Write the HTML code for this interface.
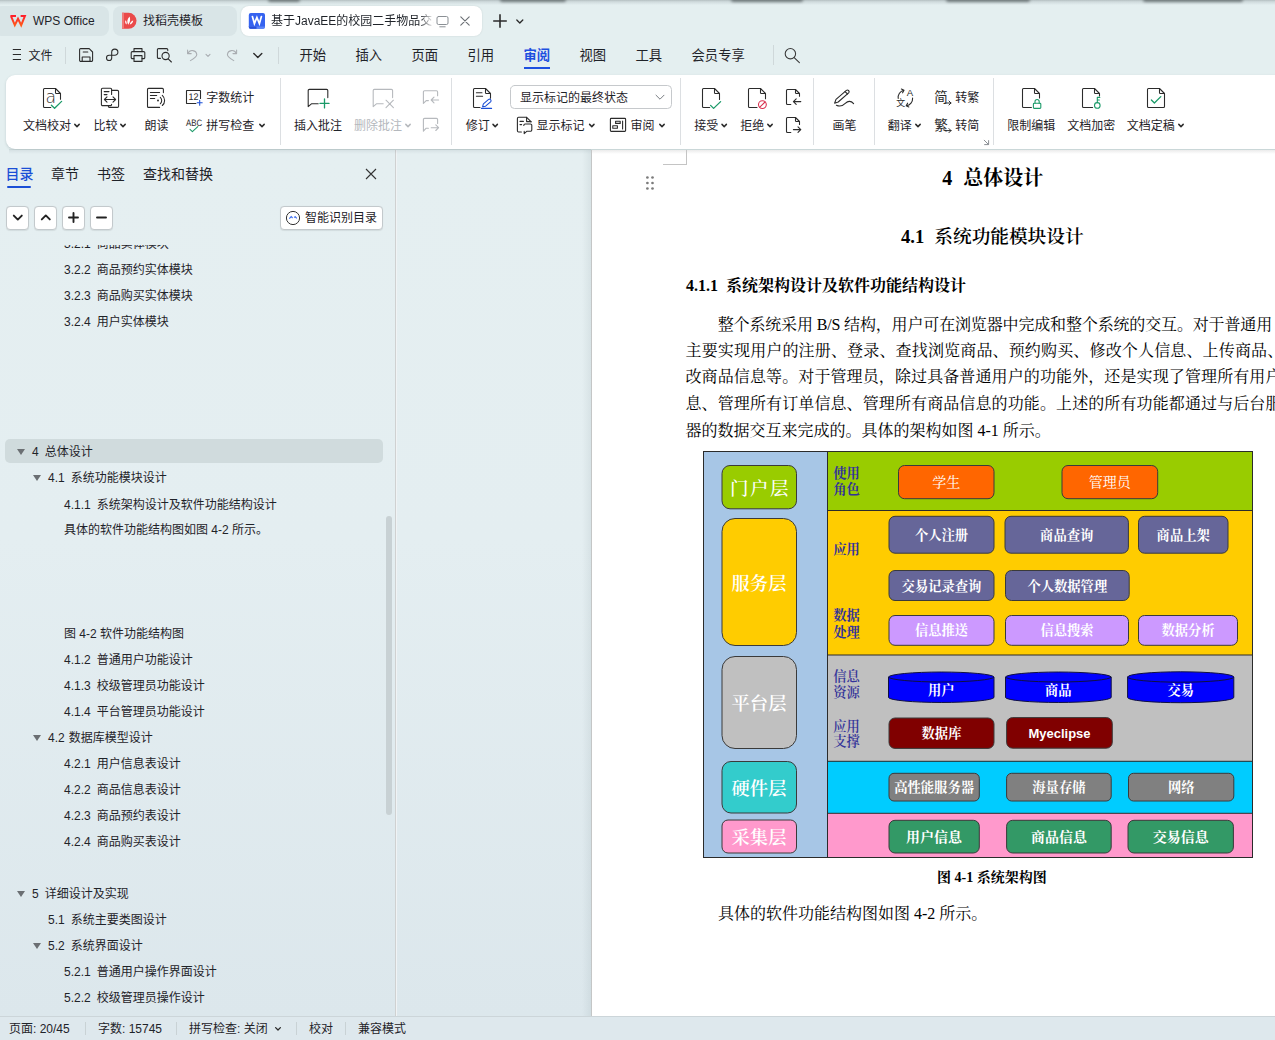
<!DOCTYPE html>
<html lang="zh-CN">
<head>
<meta charset="utf-8">
<title>WPS Office</title>
<style>
*{box-sizing:border-box;margin:0;padding:0}
html,body{width:1275px;height:1040px;overflow:hidden}
body{position:relative;background:#e4eff0;font-family:"Liberation Sans","Noto Sans CJK SC",sans-serif;font-size:13px;color:#1f2329}
.abs{position:absolute}
.t{position:absolute;white-space:nowrap;line-height:1}
svg{position:absolute;overflow:visible}
/* ---------- title tabs ---------- */
#titlebar{position:absolute;left:0;top:0;width:1275px;height:40px;background:#e4eff0;overflow:hidden}
.tab{position:absolute;top:6px;height:30px;border-radius:8px;background:#d9e5e7}
.tab.act{background:#fff;box-shadow:0 0 2px rgba(0,0,0,.12)}
/* ---------- menu ---------- */
#menubar{position:absolute;left:0;top:40px;width:1275px;height:34px}
.mi{position:absolute;top:8px;font-size:13.33px;line-height:16px;white-space:nowrap;color:#1f2329}
.vsep{position:absolute;width:1px;background:#cfd8da}
/* ---------- ribbon ---------- */
#ribbon{position:absolute;left:6px;top:74.5px;width:1275px;height:74px;background:#fff;border-radius:9px 0 0 9px;box-shadow:0 1px 2.5px rgba(60,80,85,.22)}
.rl{position:absolute;font-size:12px;line-height:14px;white-space:nowrap;color:#1f2329}
.rl.dis{color:#b4b8bd}
.rsep{position:absolute;top:78px;width:1px;height:67px;background:#dcdfe2}
/* ---------- sidebar ---------- */
#sidebar{position:absolute;left:0;top:150px;width:395px;height:866px;background:linear-gradient(180deg,#e5eff1 0,#e4eef1 45%,#dce7ec 100%)}
.sb{position:absolute;font-size:12px;line-height:14px;white-space:nowrap;color:#1f2329}
.btn{position:absolute;background:#fff;border:1px solid #c3c9cc;border-radius:4px;box-shadow:0 .5px 1px rgba(0,0,0,.08)}
/* ---------- doc ---------- */
#gutter{position:absolute;left:396px;top:150px;width:196px;height:866px;background:linear-gradient(90deg,#f0f3f5 0,#f0f3f5 1px,rgba(255,255,255,0) 1px,rgba(255,255,255,0) 186px,rgba(120,140,145,.12) 195px,#c4c6c6 195px),linear-gradient(180deg,#e5eff1 0,#e4eef1 45%,#dce7ec 100%)}
#page{position:absolute;left:592px;top:150px;width:683px;height:866px;background:linear-gradient(180deg,#ebebeb 0,#fff 4px);overflow:hidden}
.doc{font-family:"Liberation Serif","Noto Serif CJK SC",serif;color:#000}
/* ---------- status ---------- */
#status{position:absolute;left:0;top:1016px;width:1275px;height:24px;background:#dee8ed;border-top:1px solid #ccd5d9}
.st{position:absolute;top:5px;font-size:12px;line-height:14px;white-space:nowrap;color:#1f2329}
</style>
</head>
<body>
<!-- TITLEBAR -->
<div id="titlebar">
  <div class="abs" style="left:0;top:0;width:1275px;height:5px;background:linear-gradient(180deg,#b4bfc1 0,#cfdadc 35%,rgba(228,239,240,0) 100%)"></div><div class="abs" style="left:268px;top:-3px;width:32px;height:5px;border-radius:3px;background:#5f686a;filter:blur(1.5px);opacity:.8"></div><div class="abs" style="left:500px;top:-3px;width:66px;height:5px;border-radius:3px;background:#5f686a;filter:blur(1.5px);opacity:.8"></div><div class="abs" style="left:731px;top:-3px;width:72px;height:5px;border-radius:3px;background:#5f686a;filter:blur(1.5px);opacity:.8"></div><div class="abs" style="left:946px;top:-3px;width:84px;height:5px;border-radius:3px;background:#5f686a;filter:blur(1.5px);opacity:.8"></div><div class="abs" style="left:1143px;top:-3px;width:100px;height:5px;border-radius:3px;background:#5f686a;filter:blur(1.5px);opacity:.8"></div>
  <div class="tab" style="left:-6px;width:114.6px"></div>
  <div class="tab" style="left:113px;width:124px"></div>
  <div class="tab act" style="left:241px;width:241px"></div>
  <div class="t" style="left:33px;top:14px;font-size:12px;line-height:14px">WPS Office</div>
  <div class="t" style="left:143px;top:14px;font-size:12px;line-height:14px">找稻壳模板</div>
  <div class="t" style="left:271px;top:14px;font-size:12px;line-height:14px;width:163px;overflow:hidden;-webkit-mask-image:linear-gradient(90deg,#000 0,#000 148px,transparent 163px);mask-image:linear-gradient(90deg,#000 0,#000 148px,transparent 163px)">基于JavaEE的校园二手物品交易系统</div>
</div>
<!-- MENUBAR -->
<div id="menubar">
  <div class="mi" style="left:28.5px;font-size:12px;top:8px">文件</div>
  <div class="mi" style="left:299.5px">开始</div>
  <div class="mi" style="left:355.5px">插入</div>
  <div class="mi" style="left:411.5px">页面</div>
  <div class="mi" style="left:467.5px">引用</div>
  <div class="mi" style="left:523.5px;color:#1e50e0;font-weight:bold">审阅</div>
  <div class="mi" style="left:579.5px">视图</div>
  <div class="mi" style="left:635.5px">工具</div>
  <div class="mi" style="left:691.5px">会员专享</div>
  <div class="abs" style="left:524px;top:26.7px;width:26px;height:2.4px;background:#1e50e0"></div>
  <div class="vsep" style="left:65px;top:7px;height:17px"></div>
  <div class="vsep" style="left:278px;top:7px;height:17px"></div>
  <div class="vsep" style="left:773px;top:5px;height:20px"></div>
</div>
<!-- RIBBON -->
<div id="ribbon"></div>
<!--TOPSTART--><svg id="icons" style="left:0;top:0" width="1275" height="150" viewBox="0 0 1275 150" fill="none" stroke-linecap="round" stroke-linejoin="round">
<defs><linearGradient id="wg" x1="0" y1="0" x2="0" y2="1"><stop offset="0" stop-color="#ff1f2b"/><stop offset="1" stop-color="#ff5a1a"/></linearGradient></defs>
<path d="M10.4 16H16M11 16.2L14.8 25.2L18 18.8L21.2 25.2L24.9 16H20.6" stroke="url(#wg)" stroke-width="2" stroke-linejoin="miter" stroke-linecap="butt"/>
<path d="M122 12.8H128.5A8 8 0 0 1 128.5 28.8H122Z" fill="#ea4a4a" stroke="none"/>
<path d="M122 12.8H124V28.8H122Z" fill="#f07a78" stroke="none"/>
<path d="M128.2 24.8C126.6 22 127.2 19 129.6 16.6C130.6 19.4 130.2 22.4 128.2 24.8ZM126.6 24.6C125.2 23.6 124.8 22 125.4 20.2C126.6 21.2 127 22.8 126.6 24.6ZM129.8 24.6C131.8 24 133 22.6 133.2 20.6C131.4 21.2 130.2 22.6 129.8 24.6Z" fill="#fff" stroke="none"/>
<rect x="248.8" y="13" width="16.2" height="15.8" rx="2" fill="#3663f0" stroke="none"/>
<path d="M248.8 26.6H265V27A1.8 1.8 0 0 1 263.2 28.8H250.6A1.8 1.8 0 0 1 248.8 27Z" fill="#5c85f7" stroke="none"/>
<path d="M248.8 26.6H256.5V28.8H250.6A1.8 1.8 0 0 1 248.8 27Z" fill="#2a4fd6" stroke="none"/>
<path d="M252.4 16.6L254.4 23.6L256.9 17.4L259.4 23.6L261.4 16.6" stroke="#fff" stroke-width="1.7" stroke-linejoin="miter"/>
<g stroke="#8a8f94" stroke-width="1"><rect x="437" y="16.5" width="11" height="8" rx="1.5"/><path d="M439.8 26.8H445.2"/></g>
<path d="M460.8 16.8L469.2 25.2M469.2 16.8L460.8 25.2" stroke="#6a6e73" stroke-width="1.1"/>
<path d="M493.2 21H506.8M500 14.2V27.8" stroke="#2b2b2b" stroke-width="1.6" stroke-linecap="butt"/>
<path d="M516.8 20L519.8 23L522.8 20" stroke="#2b2b2b" stroke-width="1.3"/>
<path d="M12.8 49.5H21M12.8 54.5H21M12.8 59.5H21" stroke="#2b2b2b" stroke-width="1.1" stroke-linecap="butt"/>
<g stroke="#2b2b2b" stroke-width="1.08"><path d="M81 48.6H89.2L92.6 52V60.2A1.2 1.2 0 0 1 91.4 61.4H90.2M81.8 61.4H80.8A1.2 1.2 0 0 1 79.6 60.2V49.8A1.2 1.2 0 0 1 80.8 48.6"/><path d="M83.2 52H87.8"/><path d="M82.2 61.4V57H90V61.4Z"/></g>
<path d="M112 55.3H114.8A3.1 3.1 0 1 0 111.7 52.2V57.9A2.6 2.6 0 1 1 109.1 55.3H112" stroke="#2b2b2b" stroke-width="1.08"/>
<g stroke="#2b2b2b" stroke-width="1.08"><path d="M134 51.6V48.6H142V51.6"/><path d="M134 58.6H132.4A1.2 1.2 0 0 1 131.2 57.4V52.8A1.2 1.2 0 0 1 132.4 51.6H143.6A1.2 1.2 0 0 1 144.8 52.8V57.4A1.2 1.2 0 0 1 143.6 58.6H142"/><rect x="134" y="55.6" width="8" height="5.8"/></g>
<g stroke="#2b2b2b" stroke-width="1.08"><path d="M160.4 58.4H158.6A1.2 1.2 0 0 1 157.4 57.2V49.8A1.2 1.2 0 0 1 158.6 48.6H166.6A1.2 1.2 0 0 1 167.8 49.8V50.6"/><circle cx="165.6" cy="56" r="3.6"/><path d="M168.2 58.8L171.4 62"/></g>
<g stroke="#a9adb1" stroke-width="1.08"><path d="M187.6 50V53.6H191.2"/><path d="M188 53.4A4.6 4.6 0 0 1 196.8 54.6C196.8 57 194 58.6 190.4 60.6"/><path d="M206 54.4L208 56.4L210 54.4"/><path d="M236.6 50V53.6H233"/><path d="M236.2 53.4A4.6 4.6 0 0 0 227.4 54.6C227.4 57 230.2 58.6 233.8 60.6"/></g>
<path d="M253.8 53.4L257.8 57.4L261.8 53.4" stroke="#2b2b2b" stroke-width="1.4"/>
<g stroke="#3a3a3a" stroke-width="1.08"><circle cx="790.4" cy="53.7" r="5.2"/><path d="M794.2 57.6L799.4 62.6"/></g>
<path d="M50.8 107.5H44.5A1.0 1.0 0 0 1 43.5 106.5V89.5A1.0 1.0 0 0 1 44.5 88.5H55.5L60.5 93.5V99.2M55.5 88.5V92.7A0.8 0.8 0 0 0 56.3 93.5H60.5" stroke="#2b2b2b" stroke-width="1.08"/>
<text x="50.9" y="103.3" font-family="'DejaVu Sans',sans-serif" font-weight="200" font-size="18" fill="#2b2b2b" stroke="none" text-anchor="middle" textLength="10.6" lengthAdjust="spacingAndGlyphs">a</text>
<path d="M51.4 105.2L54.6 108.2L61.6 101.4" stroke="#1a9a68" stroke-width="1.3"/>
<g stroke="#2b2b2b" stroke-width="1.08"><path d="M111.6 90.4H117.4A1.2 1.2 0 0 1 118.6 91.6V106.2A1.2 1.2 0 0 1 117.4 107.4H109.6A1.2 1.2 0 0 1 108.4 106.2V105.6"/><path d="M111.6 104.2V104.4A1.2 1.2 0 0 1 110.4 105.6H102.6A1.2 1.2 0 0 1 101.4 104.4V89.5A1.2 1.2 0 0 1 102.6 88.3H110.4A1.2 1.2 0 0 1 111.6 89.5V94.4"/><path d="M104.2 91.6H109M104.2 94.6H107"/><path d="M104.4 99.5H115.6M107 96.9L104.4 99.5L107 102.1M113 96.9L115.6 99.5L113 102.1"/></g>
<g stroke="#2b2b2b" stroke-width="1.08"><path d="M159.6 107.4H148.5A1 1 0 0 1 147.5 106.4V89.4A1 1 0 0 1 148.5 88.4H162.4A1 1 0 0 1 163.4 89.4V92.6"/><path d="M150.4 92.5H159.6M150.4 95.5H156.7M150.4 98.5H154.7"/><path d="M160.3 97.3A4.5 4.5 0 0 1 160.3 103.8"/><path d="M162.3 95.3A6.8 6.8 0 0 1 162.3 105.5"/></g>
<circle cx="158" cy="100.5" r="0.95" fill="#2b2b2b" stroke="none"/>
<path d="M195.9 103.5H186.8A0.3 0.3 0 0 1 186.5 103.2V90.8A0.3 0.3 0 0 1 186.8 90.5H200.2A0.3 0.3 0 0 1 200.5 90.8V98.4" stroke="#2b2b2b" stroke-width="1.1"/>
<text x="193.5" y="100" text-rendering="geometricPrecision" font-family="'Liberation Sans',sans-serif" font-size="9.5" fill="#2b2b2b" stroke="none" text-anchor="middle" textLength="10" lengthAdjust="spacingAndGlyphs">12</text>
<path d="M197.2 102.8H202.2M199.7 100.3V105.3" stroke="#1b4fd6" stroke-width="1.08"/>
<text x="194.2" y="126" font-family="'Liberation Sans',sans-serif" font-size="9.3" text-rendering="geometricPrecision" fill="#2b2b2b" stroke="none" text-anchor="middle" textLength="16.2" lengthAdjust="spacingAndGlyphs">ABC</text>
<path d="M190 129.4L192.4 131.6L197.8 126.6" stroke="#1a9a68" stroke-width="1.08"/>
<path d="M327.8 97.6V90.60000000000001A1.2 1.2 0 0 0 326.6 89.4H309.4A1.2 1.2 0 0 0 308.2 90.60000000000001V106.6L311.4 103.8H318.2" stroke="#2b2b2b" stroke-width="1.08"/>
<path d="M320 103.4H329M324.5 98.9V107.9" stroke="#1a9a68" stroke-width="1.3"/>
<path d="M392.6 97.6V90.60000000000001A1.2 1.2 0 0 0 391.40000000000003 89.4H374.4A1.2 1.2 0 0 0 373.2 90.60000000000001V106.6L376.4 103.8H383.2" stroke="#b6b9bd" stroke-width="1.08"/>
<path d="M386 100.2L393.4 107.6M393.4 100.2L386 107.6" stroke="#b6b9bd" stroke-width="1.08"/>
<path d="M437.6 95.8V92.0A1.2 1.2 0 0 0 436.40000000000003 90.8H424.59999999999997A1.2 1.2 0 0 0 423.4 92.0V103.4L426.2 100.6H428.4" stroke="#b6b9bd" stroke-width="1.1"/>
<path d="M431.2 100H438.6M434 97.2L431.2 100L434 102.8" stroke="#b6b9bd" stroke-width="1.1"/>
<path d="M437.6 123.4V119.60000000000001A1.2 1.2 0 0 0 436.40000000000003 118.4H424.59999999999997A1.2 1.2 0 0 0 423.4 119.60000000000001V131.2L426.2 128.2H428.4" stroke="#b6b9bd" stroke-width="1.1"/>
<path d="M431.2 127.7H438.6M435.8 124.9L438.6 127.7L435.8 130.5" stroke="#b6b9bd" stroke-width="1.1"/>
<path d="M480 107.5H474.5A1.0 1.0 0 0 1 473.5 106.5V89.5A1.0 1.0 0 0 1 474.5 88.5H485.5L490.5 93.5V98.2M485.5 88.5V92.7A0.8 0.8 0 0 0 486.3 93.5H490.5" stroke="#2b2b2b" stroke-width="1.08"/>
<path d="M476.4 92.8H482M476.4 96.3H482.6" stroke="#2b2b2b" stroke-width="1.08"/>
<path d="M482.6 106.6L483.4 103.8L488.6 99.4A1.6 1.6 0 0 1 490.8 101.6L485.6 106.2ZM481.4 108.4H491.6" stroke="#1b4fd6" stroke-width="1.08"/>
<rect x="510.5" y="85.5" width="161" height="23" rx="4" stroke="#c6c9cc" stroke-width="1" fill="#fff"/>
<path d="M656 95.2L660 99.2L664 95.2" stroke="#7a7e83" stroke-width="1"/>
<g stroke="#2b2b2b" stroke-width="1.1"><path d="M521.4 132H518.6A1.2 1.2 0 0 1 517.4 130.8V118.5A1.2 1.2 0 0 1 518.6 117.3H526.6L531 121.6V122"/><path d="M526.6 117.3V121.6H531"/><path d="M520 121.4H523.4M520 124.6H521.6"/><path d="M524.2 131.4V133.6L527 131.2H530.4A1.4 1.4 0 0 0 531.8 129.8V125.4A1.4 1.4 0 0 0 530.4 124H525.2A1.4 1.4 0 0 0 523.8 125.4"/></g>
<g stroke="#2b2b2b" stroke-width="1.1"><rect x="610.4" y="118.4" width="15.2" height="13" rx="0.8"/><rect x="615.6" y="121.2" width="4.6" height="2.2"/><rect x="612.8" y="125.8" width="4.6" height="2.4"/><path d="M622.6 121V129"/></g>
<path d="M709.7 107.5H703.5A1.0 1.0 0 0 1 702.5 106.5V89.5A1.0 1.0 0 0 1 703.5 88.5H714.5L719.5 93.5V99.5M714.5 88.5V92.7A0.8 0.8 0 0 0 715.3 93.5H719.5" stroke="#2b2b2b" stroke-width="1.08"/>
<path d="M710.6 105.4L713.6 108.4L720.6 101.6" stroke="#1a9a68" stroke-width="1.3"/>
<path d="M757 107.5H749.5A1.0 1.0 0 0 1 748.5 106.5V89.5A1.0 1.0 0 0 1 749.5 88.5H760.5L765.5 93.5V98.8M760.5 88.5V92.7A0.8 0.8 0 0 0 761.3 93.5H765.5" stroke="#2b2b2b" stroke-width="1.08"/>
<circle cx="762.4" cy="104.6" r="3.9" stroke="#d9304f" stroke-width="1.08"/><path d="M765 102L759.8 107.2" stroke="#d9304f" stroke-width="1.08"/>
<path d="M790.8 104.5H787.5A1.0 1.0 0 0 1 786.5 103.5V90.5A1.0 1.0 0 0 1 787.5 89.5H795.5L799.5 93.5V96.3M795.5 89.5V92.7A0.8 0.8 0 0 0 796.3 93.5H799.5" stroke="#2b2b2b" stroke-width="1.1"/>
<path d="M793.4 101.6H800.8M796.2 98.8L793.4 101.6L796.2 104.4" stroke="#2b2b2b" stroke-width="1.1"/>
<path d="M790.8 132.5H787.5A1.0 1.0 0 0 1 786.5 131.5V118.5A1.0 1.0 0 0 1 787.5 117.5H795.5L799.5 121.5V124.5M795.5 117.5V120.7A0.8 0.8 0 0 0 796.3 121.5H799.5" stroke="#2b2b2b" stroke-width="1.1"/>
<path d="M793.4 129.6H800.8M798 126.8L800.8 129.6L798 132.4" stroke="#2b2b2b" stroke-width="1.1"/>
<g stroke="#2b2b2b" stroke-width="1.1"><path d="M834.6 103.2L836 99.4L846.4 90.4A1.7 1.7 0 0 1 848.9 92.6L838.2 102Z"/><path d="M845 91.6L847.6 94"/><path d="M836.4 105.2C840 107 843.4 105.4 845.6 103.2C847.6 101.2 850.6 100.2 853.6 103.6"/></g>
<g stroke="#2b2b2b" stroke-width="1.1"><path d="M898.2 98.4A7.4 7.4 0 0 1 903.8 90.2M901.4 89L904 90.2L902.6 92.8"/><path d="M912.6 98A7.4 7.4 0 0 1 906.4 105.8M908.8 107L906.2 105.8L907.6 103.2"/></g>
<text x="910" y="96" font-family="'Liberation Sans',sans-serif" font-size="9.6" fill="#2b2b2b" stroke="none" text-anchor="middle">A</text>
<text x="900.8" y="106.2" font-family="'Liberation Sans','Noto Sans CJK SC',sans-serif" font-size="9" fill="#2b2b2b" stroke="none" text-anchor="middle">文</text>
<text x="934.2" y="102" font-family="'Noto Sans CJK SC',sans-serif" font-weight="400" font-size="13.5" fill="#2b2b2b" stroke="none">简</text>
<path d="M945 103H951M949 101L951 103L949 105" stroke="#2b2b2b" stroke-width="1"/>
<text x="934.2" y="129.6" font-family="'Noto Sans CJK SC',sans-serif" font-weight="400" font-size="13.5" fill="#2b2b2b" stroke="none">繁</text>
<path d="M945 130.6H951M949 128.6L951 130.6L949 132.6" stroke="#2b2b2b" stroke-width="1"/>
<path d="M984.2 140.2L988.4 144.4M988.6 140.6V144.6H984.6" stroke="#8a8f94" stroke-width="1"/>
<path d="M1031.4 107.5H1023.5A1.0 1.0 0 0 1 1022.5 106.5V89.5A1.0 1.0 0 0 1 1023.5 88.5H1034.5L1039.5 93.5V98M1034.5 88.5V92.7A0.8 0.8 0 0 0 1035.3 93.5H1039.5" stroke="#2b2b2b" stroke-width="1.08"/>
<rect x="1033.4" y="103.2" width="7.4" height="5.2" rx="0.8" stroke="#1a9a68" stroke-width="1.08"/><path d="M1035 103.2V101.6A2.1 2.1 0 0 1 1039.2 101.6V103.2" stroke="#1a9a68" stroke-width="1.08"/>
<path d="M1092.6 107.5H1083.5A1.0 1.0 0 0 1 1082.5 106.5V89.5A1.0 1.0 0 0 1 1083.5 88.5H1094.5L1099.5 93.5V96M1094.5 88.5V92.7A0.8 0.8 0 0 0 1095.3 93.5H1099.5" stroke="#2b2b2b" stroke-width="1.08"/>
<circle cx="1097.3" cy="105.4" r="2.8" stroke="#1a9a68" stroke-width="1.08"/><path d="M1097.3 102.6V97.4H1099.8M1097.3 100H1099.4" stroke="#1a9a68" stroke-width="1.08"/>
<path d="M1148.5 88.5H1159.5L1164.5 93.5V106.5A1.0 1.0 0 0 1 1163.5 107.5H1148.5A1.0 1.0 0 0 1 1147.5 106.5V89.5A1.0 1.0 0 0 1 1148.5 88.5ZM1159.5 88.5V92.7A0.8 0.8 0 0 0 1160.3 93.5H1164.5" stroke="#2b2b2b" stroke-width="1.08"/>
<path d="M1151.4 100L1154.4 103L1160.8 96.6" stroke="#1a9a68" stroke-width="1.3"/>
<path d="M74.8 124.4L77.0 126.6L79.2 124.4" stroke="#2b2b2b" stroke-width="1.5"/>
<path d="M120.8 124.4L123.0 126.6L125.2 124.4" stroke="#2b2b2b" stroke-width="1.5"/>
<path d="M259.8 124.4L262.0 126.6L264.2 124.4" stroke="#2b2b2b" stroke-width="1.5"/>
<path d="M493.0 124.4L495.2 126.6L497.4 124.4" stroke="#2b2b2b" stroke-width="1.5"/>
<path d="M589.6 124.4L591.8 126.6L594.0 124.4" stroke="#2b2b2b" stroke-width="1.5"/>
<path d="M659.8 124.4L662.0 126.6L664.2 124.4" stroke="#2b2b2b" stroke-width="1.5"/>
<path d="M722.0 124.4L724.2 126.6L726.4 124.4" stroke="#2b2b2b" stroke-width="1.5"/>
<path d="M767.8 124.4L770.0 126.6L772.2 124.4" stroke="#2b2b2b" stroke-width="1.5"/>
<path d="M915.8 124.4L918.0 126.6L920.2 124.4" stroke="#2b2b2b" stroke-width="1.5"/>
<path d="M1178.8 124.4L1181.0 126.6L1183.2 124.4" stroke="#2b2b2b" stroke-width="1.5"/>
<path d="M405.8 124.4L408.0 126.6L410.2 124.4" stroke="#b6b9bd" stroke-width="1.5"/>
</svg>
<div class="rl" style="left:23px;top:118.7px">文档校对</div>
<div class="rl" style="left:93.4px;top:118.7px">比较</div>
<div class="rl" style="left:144.6px;top:118.7px">朗读</div>
<div class="rl" style="left:206.2px;top:90.6px">字数统计</div>
<div class="rl" style="left:206.2px;top:118.7px">拼写检查</div>
<div class="rl" style="left:294px;top:118.7px">插入批注</div>
<div class="rl dis" style="left:354px;top:118.7px">删除批注</div>
<div class="rl" style="left:465.8px;top:118.7px">修订</div>
<div class="rl" style="left:520px;top:91px">显示标记的最终状态</div>
<div class="rl" style="left:536.4px;top:118.7px">显示标记</div>
<div class="rl" style="left:630.6px;top:118.7px">审阅</div>
<div class="rl" style="left:694.2px;top:118.7px">接受</div>
<div class="rl" style="left:740.2px;top:118.7px">拒绝</div>
<div class="rl" style="left:832.6px;top:118.7px">画笔</div>
<div class="rl" style="left:887.8px;top:118.7px">翻译</div>
<div class="rl" style="left:955.2px;top:90.6px">转繁</div>
<div class="rl" style="left:955.2px;top:118.7px">转简</div>
<div class="rl" style="left:1007.2px;top:118.7px">限制编辑</div>
<div class="rl" style="left:1067.2px;top:118.7px">文档加密</div>
<div class="rl" style="left:1126.8px;top:118.7px">文档定稿</div>
<div class="rsep" style="left:280px"></div><div class="rsep" style="left:451px"></div><div class="rsep" style="left:680px"></div><div class="rsep" style="left:813px"></div><div class="rsep" style="left:874px"></div><div class="rsep" style="left:993px"></div><!--TOPEND-->
<!-- SIDEBAR -->
<div id="sidebar">
<div class="t" style="left:5.5px;top:16px;font-size:14px;line-height:16px;color:#1b4fd6;font-weight:500">目录</div>
<div class="t" style="left:51px;top:16px;font-size:14px;line-height:16px">章节</div>
<div class="t" style="left:97px;top:16px;font-size:14px;line-height:16px">书签</div>
<div class="t" style="left:143px;top:16px;font-size:14px;line-height:16px">查找和替换</div>
<div class="abs" style="left:7px;top:36px;width:24px;height:2px;border-radius:1px;background:#1b4fd6"></div>
<svg style="left:365px;top:18px" width="12" height="12" viewBox="0 0 12 12"><path d="M1 1L11 11M11 1L1 11" stroke="#333" stroke-width="1.1" fill="none"/></svg>
<div class="btn" style="left:5.5px;top:56px;width:23px;height:23.5px"></div>
<div class="btn" style="left:33.5px;top:56px;width:23px;height:23.5px"></div>
<div class="btn" style="left:61.5px;top:56px;width:23px;height:23.5px"></div>
<div class="btn" style="left:89.5px;top:56px;width:23px;height:23.5px"></div>
<svg style="left:5.5px;top:56.3px" width="110" height="23" viewBox="0 0 110 23"><g stroke="#222" stroke-width="1.9" fill="none" stroke-linecap="round" stroke-linejoin="round"><path d="M7.8 9.6L11.8 13.6L15.8 9.6"/><path d="M35.8 13.4L39.8 9.4L43.8 13.4"/><path d="M63 11.5H72M67.5 7V16"/><path d="M91 11.5H100"/></g></svg>
<div class="btn" style="left:279.5px;top:56px;width:103px;height:23.5px"></div>
<svg style="left:285px;top:60px" width="16" height="16" viewBox="0 0 16 16"><circle cx="8" cy="8" r="6.6" stroke="#333" stroke-width="1" fill="#fff"/><path d="M4.3 8.6L6.2 6.6L7.6 8" stroke="#3a6cf0" stroke-width="1.1" fill="none"/><path d="M9 7.4L10.2 6.6L11.8 8.4" stroke="#3a6cf0" stroke-width="1.1" fill="none"/></svg>
<div class="sb" style="left:305px;top:61px">智能识别目录</div>
<div class="abs" style="left:0;top:95px;width:395px;height:771px;overflow:hidden">
<div class="abs" style="left:5px;top:194px;width:378px;height:23.5px;border-radius:5px;background:#d0dbdd"></div>
<div class="sb" style="left:64px;top:-8px">3.2.1<span style="display:inline-block;width:6px"></span>商品实体模块</div>
<div class="sb" style="left:64px;top:18px">3.2.2<span style="display:inline-block;width:6px"></span>商品预约实体模块</div>
<div class="sb" style="left:64px;top:44px">3.2.3<span style="display:inline-block;width:6px"></span>商品购买实体模块</div>
<div class="sb" style="left:64px;top:70px">3.2.4<span style="display:inline-block;width:6px"></span>用户实体模块</div>
<svg style="left:17px;top:204px" width="8" height="6" viewBox="0 0 8 6"><path d="M0 0H8L4 6Z" fill="#6b6f73"/></svg>
<div class="sb" style="left:32px;top:200px">4<span style="display:inline-block;width:6px"></span>总体设计</div>
<svg style="left:33px;top:230px" width="8" height="6" viewBox="0 0 8 6"><path d="M0 0H8L4 6Z" fill="#6b6f73"/></svg>
<div class="sb" style="left:48px;top:226px">4.1<span style="display:inline-block;width:6px"></span>系统功能模块设计</div>
<div class="sb" style="left:64px;top:253px">4.1.1<span style="display:inline-block;width:6px"></span>系统架构设计及软件功能结构设计</div>
<div class="sb" style="left:64px;top:278px">具体的软件功能结构图如图 4-2 所示。</div>
<div class="sb" style="left:64px;top:382px">图 4-2 软件功能结构图</div>
<div class="sb" style="left:64px;top:408px">4.1.2<span style="display:inline-block;width:6px"></span>普通用户功能设计</div>
<div class="sb" style="left:64px;top:434px">4.1.3<span style="display:inline-block;width:6px"></span>校级管理员功能设计</div>
<div class="sb" style="left:64px;top:460px">4.1.4<span style="display:inline-block;width:6px"></span>平台管理员功能设计</div>
<svg style="left:33px;top:490px" width="8" height="6" viewBox="0 0 8 6"><path d="M0 0H8L4 6Z" fill="#6b6f73"/></svg>
<div class="sb" style="left:48px;top:486px">4.2<span style="display:inline-block;width:4px"></span>数据库模型设计</div>
<div class="sb" style="left:64px;top:512px">4.2.1<span style="display:inline-block;width:6px"></span>用户信息表设计</div>
<div class="sb" style="left:64px;top:538px">4.2.2<span style="display:inline-block;width:6px"></span>商品信息表设计</div>
<div class="sb" style="left:64px;top:564px">4.2.3<span style="display:inline-block;width:6px"></span>商品预约表设计</div>
<div class="sb" style="left:64px;top:590px">4.2.4<span style="display:inline-block;width:6px"></span>商品购买表设计</div>
<svg style="left:17px;top:646px" width="8" height="6" viewBox="0 0 8 6"><path d="M0 0H8L4 6Z" fill="#6b6f73"/></svg>
<div class="sb" style="left:32px;top:642px">5<span style="display:inline-block;width:6px"></span>详细设计及实现</div>
<div class="sb" style="left:48px;top:668px">5.1<span style="display:inline-block;width:6px"></span>系统主要类图设计</div>
<svg style="left:33px;top:698px" width="8" height="6" viewBox="0 0 8 6"><path d="M0 0H8L4 6Z" fill="#6b6f73"/></svg>
<div class="sb" style="left:48px;top:694px">5.2<span style="display:inline-block;width:6px"></span>系统界面设计</div>
<div class="sb" style="left:64px;top:720px">5.2.1<span style="display:inline-block;width:6px"></span>普通用户操作界面设计</div>
<div class="sb" style="left:64px;top:746px">5.2.2<span style="display:inline-block;width:6px"></span>校级管理员操作设计</div>
</div>
<div class="abs" style="left:386px;top:366px;width:6px;height:299px;border-radius:3px;background:#c8d1d4"></div>
</div>
<div class="abs" style="left:395px;top:150px;width:1px;height:866px;background:#cfd1d1"></div>
<!-- DOC -->
<div id="gutter"></div>
<div id="page" class="doc">
<div class="abs" style="left:71px;top:0px;width:24px;height:15px;border-right:1px solid #c4c4c4;border-bottom:1px solid #c4c4c4"></div>
<svg style="left:54px;top:25px" width="9" height="15" viewBox="0 0 9 15"><g fill="#7b7b7b"><circle cx="1.4" cy="2.5" r="1.35"/><circle cx="6.5" cy="2.5" r="1.35"/><circle cx="1.4" cy="8" r="1.35"/><circle cx="6.5" cy="8" r="1.35"/><circle cx="1.4" cy="13.5" r="1.35"/><circle cx="6.5" cy="13.5" r="1.35"/></g></svg>
<div class="t" style="left:350.3px;top:17px;font-size:20px;line-height:22px;font-weight:bold">4<span style="display:inline-block;width:11px"></span>总体设计</div>
<div class="t" style="left:309px;top:76px;font-size:18.67px;line-height:22px;font-weight:bold">4.1<span style="display:inline-block;width:10px"></span><span style="font-weight:600">系统功能模块设计</span></div>
<div class="t" style="left:94px;top:126px;font-size:16px;line-height:20px;font-weight:bold">4.1.1<span style="display:inline-block;width:8px"></span>系统架构设计及软件功能结构设计</div>
<div class="t" style="left:125.7px;letter-spacing:-0.15px;top:164.6px;font-size:16px;line-height:20px">整个系统采用 B/S 结构，用户可在浏览器中完成和整个系统的交互。对于普通用</div>
<div class="t" style="left:93.5px;letter-spacing:0.16px;top:191px;font-size:16px;line-height:20px">主要实现用户的注册、登录、查找浏览商品、预约购买、修改个人信息、上传商品、修</div>
<div class="t" style="left:93.5px;letter-spacing:0.11px;top:217px;font-size:16px;line-height:20px">改商品信息等。对于管理员，除过具备普通用户的功能外，还是实现了管理所有用户信</div>
<div class="t" style="left:93.5px;letter-spacing:0.11px;top:244px;font-size:16px;line-height:20px">息、管理所有订单信息、管理所有商品信息的功能。上述的所有功能都通过与后台服务</div>
<div class="t" style="left:93.5px;top:271px;font-size:16px;line-height:20px">器的数据交互来完成的。具体的架构如图 4-1 所示。</div>
<!--FIGSTART--><svg style="left:108px;top:298px" width="560" height="414" viewBox="700 448 560 414" font-family="'Liberation Serif','Noto Serif CJK SC',serif">
<rect x="703.5" y="451.5" width="123.5" height="406.0" fill="#a7c6e6"/>
<rect x="827" y="451.5" width="425.5" height="59" fill="#99cc00"/>
<rect x="827" y="510.5" width="425.5" height="144.5" fill="#ffcc00"/>
<rect x="827" y="655" width="425.5" height="106" fill="#c0c0c0"/>
<rect x="827" y="761" width="425.5" height="52.2" fill="#00ccff"/>
<rect x="827" y="813.2" width="425.5" height="44.3" fill="#ff99cc"/>
<g stroke="#2b2b2b" stroke-width="1" fill="none">
<rect x="703.5" y="451.5" width="549.0" height="406.0"/>
<path d="M827.5 451.5V857.5"/>
<path d="M827 510.5H1252.5"/>
<path d="M827 655H1252.5"/>
<path d="M827 761.3H1252.5"/>
<path d="M827 813.3H1252.5"/>
</g>
<rect x="722" y="465.5" width="74.5" height="43.3" rx="8" ry="8" fill="#99cc00" stroke="#3a3a3a" stroke-width="1"/>
<text x="760" y="488.8" font-size="18.5" font-weight="500" fill="#fff" text-anchor="middle" dominant-baseline="central" letter-spacing="1.5">门户层</text>
<rect x="722" y="518.5" width="74.5" height="127" rx="13" ry="13" fill="#ffcc00" stroke="#3a3a3a" stroke-width="1"/>
<text x="759" y="583.7" font-size="18.3" font-weight="600" fill="#fff" text-anchor="middle" dominant-baseline="central" >服务层</text>
<rect x="722" y="656.5" width="74.5" height="92" rx="13" ry="13" fill="#c0c0c0" stroke="#3a3a3a" stroke-width="1"/>
<text x="759" y="704.2" font-size="18.3" font-weight="600" fill="#fff" text-anchor="middle" dominant-baseline="central" >平台层</text>
<rect x="722" y="761.5" width="74.5" height="51.5" rx="9" ry="9" fill="#33cccc" stroke="#3a3a3a" stroke-width="1"/>
<text x="759" y="789" font-size="18.3" font-weight="600" fill="#fff" text-anchor="middle" dominant-baseline="central" >硬件层</text>
<rect x="722" y="820" width="74.5" height="33" rx="6" ry="6" fill="#ff99cc" stroke="#3a3a3a" stroke-width="1"/>
<text x="759" y="838.2" font-size="18.3" font-weight="600" fill="#fff" text-anchor="middle" dominant-baseline="central" >采集层</text>
<text x="833.2" y="473.6" font-size="13.3" font-weight="bold" fill="#333399" dominant-baseline="central">使用</text>
<text x="833.2" y="489.4" font-size="13.3" font-weight="bold" fill="#333399" dominant-baseline="central">角色</text>
<text x="833.2" y="549.9" font-size="13.3" font-weight="bold" fill="#333399" dominant-baseline="central">应用</text>
<text x="833.2" y="615.6" font-size="13.3" font-weight="bold" fill="#333399" dominant-baseline="central">数据</text>
<text x="833.2" y="632.6" font-size="13.3" font-weight="bold" fill="#333399" dominant-baseline="central">处理</text>
<text x="833.2" y="676.9" font-size="13.3" font-weight="600" fill="#333399" dominant-baseline="central">信息</text>
<text x="833.2" y="692.3" font-size="13.3" font-weight="600" fill="#333399" dominant-baseline="central">资源</text>
<text x="833.2" y="726.1" font-size="13.3" font-weight="600" fill="#333399" dominant-baseline="central">应用</text>
<text x="833.2" y="741.6" font-size="13.3" font-weight="600" fill="#333399" dominant-baseline="central">支撑</text>
<rect x="898.5" y="465.5" width="95.5" height="33.2" rx="6" ry="6" fill="#ff6600" stroke="#3a3a3a" stroke-width="1"/>
<text x="946.2" y="482.6" font-size="14" font-weight="normal" fill="#fff" text-anchor="middle" dominant-baseline="central" >学生</text>
<rect x="1062" y="465.5" width="95.7" height="33.2" rx="6" ry="6" fill="#ff6600" stroke="#3a3a3a" stroke-width="1"/>
<text x="1109.8" y="482.6" font-size="14" font-weight="normal" fill="#fff" text-anchor="middle" dominant-baseline="central" >管理员</text>
<rect x="889" y="516.3" width="105" height="36.9" rx="6" ry="6" fill="#666699" stroke="#3a3a3a" stroke-width="1"/>
<text x="941.5" y="535.2" font-size="13.3" font-weight="bold" fill="#fff" text-anchor="middle" dominant-baseline="central" >个人注册</text>
<rect x="1005" y="516.3" width="123.4" height="36.9" rx="6" ry="6" fill="#666699" stroke="#3a3a3a" stroke-width="1"/>
<text x="1066.7" y="535.2" font-size="13.3" font-weight="bold" fill="#fff" text-anchor="middle" dominant-baseline="central" >商品查询</text>
<rect x="1138.5" y="516.3" width="89.5" height="36.9" rx="6" ry="6" fill="#666699" stroke="#3a3a3a" stroke-width="1"/>
<text x="1183.2" y="535.2" font-size="13.3" font-weight="bold" fill="#fff" text-anchor="middle" dominant-baseline="central" >商品上架</text>
<rect x="889" y="570.5" width="105" height="30" rx="6" ry="6" fill="#666699" stroke="#3a3a3a" stroke-width="1"/>
<text x="941.5" y="586" font-size="13.3" font-weight="bold" fill="#fff" text-anchor="middle" dominant-baseline="central" >交易记录查询</text>
<rect x="1005.5" y="570.5" width="123.7" height="30" rx="6" ry="6" fill="#666699" stroke="#3a3a3a" stroke-width="1"/>
<text x="1067.3" y="586" font-size="13.3" font-weight="bold" fill="#fff" text-anchor="middle" dominant-baseline="central" >个人数据管理</text>
<rect x="889" y="615.5" width="105" height="29.8" rx="6" ry="6" fill="#cc99ff" stroke="#3a3a3a" stroke-width="1"/>
<text x="941.5" y="630.9" font-size="13.3" font-weight="bold" fill="#fff" text-anchor="middle" dominant-baseline="central" >信息推送</text>
<rect x="1005.5" y="615.5" width="123" height="29.8" rx="6" ry="6" fill="#cc99ff" stroke="#3a3a3a" stroke-width="1"/>
<text x="1067" y="630.9" font-size="13.3" font-weight="bold" fill="#fff" text-anchor="middle" dominant-baseline="central" >信息搜索</text>
<rect x="1138.5" y="615.5" width="99" height="29.8" rx="6" ry="6" fill="#cc99ff" stroke="#3a3a3a" stroke-width="1"/>
<text x="1188" y="630.9" font-size="13.3" font-weight="bold" fill="#fff" text-anchor="middle" dominant-baseline="central" >数据分析</text>
<path d="M888.5 677V697.5A52.8 5.2 0 0 0 994 697.5V677A52.8 5.2 0 0 0 888.5 677Z" fill="#0000ff" stroke="#101040" stroke-width="1"/>
<path d="M888.5 677A52.8 5.2 0 0 0 994 677" fill="none" stroke="#101040" stroke-width="1"/>
<text x="941.2" y="690.2" font-size="13.3" font-weight="bold" fill="#fff" text-anchor="middle" dominant-baseline="central" >用户</text>
<path d="M1005.5 677V697.5A52.9 5.2 0 0 0 1111.2 697.5V677A52.9 5.2 0 0 0 1005.5 677Z" fill="#0000ff" stroke="#101040" stroke-width="1"/>
<path d="M1005.5 677A52.9 5.2 0 0 0 1111.2 677" fill="none" stroke="#101040" stroke-width="1"/>
<text x="1058.3" y="690.2" font-size="13.3" font-weight="bold" fill="#fff" text-anchor="middle" dominant-baseline="central" >商品</text>
<path d="M1127.6 677V697.5A53.1 5.2 0 0 0 1233.8 697.5V677A53.1 5.2 0 0 0 1127.6 677Z" fill="#0000ff" stroke="#101040" stroke-width="1"/>
<path d="M1127.6 677A53.1 5.2 0 0 0 1233.8 677" fill="none" stroke="#101040" stroke-width="1"/>
<text x="1180.7" y="690.2" font-size="13.3" font-weight="bold" fill="#fff" text-anchor="middle" dominant-baseline="central" >交易</text>
<rect x="889" y="718" width="105" height="30.4" rx="6" ry="6" fill="#800000" stroke="#3a3a3a" stroke-width="1"/>
<text x="941.5" y="733.7" font-size="13.3" font-weight="bold" fill="#fff" text-anchor="middle" dominant-baseline="central" >数据库</text>
<rect x="1006.6" y="717.6" width="105.7" height="30.6" rx="6" ry="6" fill="#800000" stroke="#3a3a3a" stroke-width="1"/>
<text x="1059.5" y="733.4" font-size="13" font-weight="bold" fill="#fff" text-anchor="middle" dominant-baseline="central" font-family="'Liberation Sans',sans-serif">Myeclipse</text>
<rect x="889" y="773.3" width="90.3" height="27.7" rx="5" ry="5" fill="#808080" stroke="#3a3a3a" stroke-width="1"/>
<text x="934.1" y="787.6" font-size="13.3" font-weight="bold" fill="#fff" text-anchor="middle" dominant-baseline="central" >高性能服务器</text>
<rect x="1006.6" y="773.3" width="104.6" height="27.7" rx="5" ry="5" fill="#808080" stroke="#3a3a3a" stroke-width="1"/>
<text x="1058.9" y="787.6" font-size="13.3" font-weight="bold" fill="#fff" text-anchor="middle" dominant-baseline="central" >海量存储</text>
<rect x="1128.5" y="773.3" width="105.3" height="27.7" rx="5" ry="5" fill="#808080" stroke="#3a3a3a" stroke-width="1"/>
<text x="1181.2" y="787.6" font-size="13.3" font-weight="bold" fill="#fff" text-anchor="middle" dominant-baseline="central" >网络</text>
<rect x="889" y="820.3" width="90.3" height="32.7" rx="6" ry="6" fill="#339966" stroke="#3a3a3a" stroke-width="1"/>
<text x="934.1" y="837.1" font-size="14" font-weight="bold" fill="#fff" text-anchor="middle" dominant-baseline="central" >用户信息</text>
<rect x="1006.6" y="820.3" width="104.6" height="32.7" rx="6" ry="6" fill="#339966" stroke="#3a3a3a" stroke-width="1"/>
<text x="1058.9" y="837.1" font-size="14" font-weight="bold" fill="#fff" text-anchor="middle" dominant-baseline="central" >商品信息</text>
<rect x="1128" y="820.3" width="105.4" height="32.7" rx="6" ry="6" fill="#339966" stroke="#3a3a3a" stroke-width="1"/>
<text x="1180.7" y="837.1" font-size="14" font-weight="bold" fill="#fff" text-anchor="middle" dominant-baseline="central" >交易信息</text>
</svg><!--FIGEND-->
<div class="t" style="left:345px;top:718.5px;font-size:14px;line-height:18px;font-weight:bold">图 4-1 系统架构图</div>
<div class="t" style="left:126px;top:753.5px;font-size:16px;line-height:20px">具体的软件功能结构图如图 4-2 所示。</div>
</div>
<div class="abs" style="left:9px;top:149px;width:582px;height:5px;background:linear-gradient(180deg,rgba(90,110,118,.14) 0,rgba(90,110,118,.08) 40%,rgba(90,110,118,0) 100%)"></div>
<!-- STATUS -->
<div id="status">
  <div class="st" style="left:9px">页面: 20/45</div>
  <div class="st" style="left:98px">字数: 15745</div>
  <div class="st" style="left:189px">拼写检查: 关闭</div>
  <div class="st" style="left:309px">校对</div>
  <div class="st" style="left:358px">兼容模式</div>
  <div class="abs" style="left:85px;top:5px;width:1px;height:13px;background:#c9d2d5"></div><div class="abs" style="left:176px;top:5px;width:1px;height:13px;background:#c9d2d5"></div><div class="abs" style="left:296px;top:5px;width:1px;height:13px;background:#c9d2d5"></div><div class="abs" style="left:345px;top:5px;width:1px;height:13px;background:#c9d2d5"></div><svg style="left:274px;top:9px" width="8" height="6" viewBox="0 0 8 6"><path d="M1.6 1.6L4 4L6.4 1.6" stroke="#2b2b2b" stroke-width="1.3" fill="none" stroke-linecap="round" stroke-linejoin="round"/></svg>
</div>
</body>
</html>
